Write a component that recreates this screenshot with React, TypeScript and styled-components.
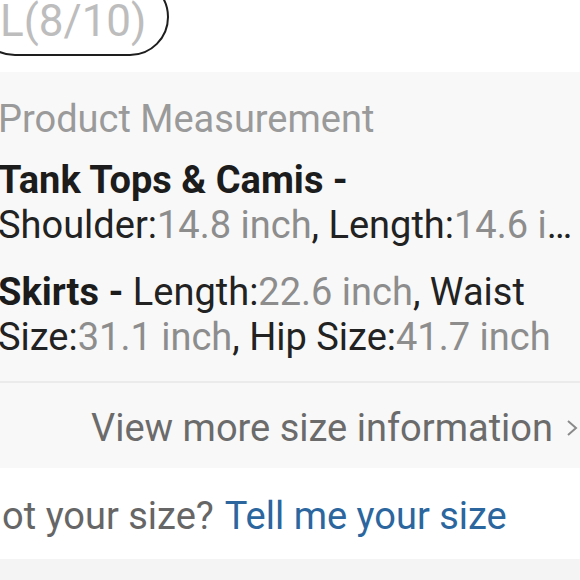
import React from "react";
import styled, { createGlobalStyle } from "styled-components";

const Global = createGlobalStyle`
  html, body { margin: 0; padding: 0; background: #fff; overflow: hidden; }
  body { font-family: Roboto, "Noto Sans", "Liberation Sans", sans-serif; }
`;

const Page = styled.div`
  width: 610px;
  margin-left: -30px;
  display: flex;
  flex-direction: column;
`;

const SizeRow = styled.div`
  height: 72px;
  display: flex;
  align-items: flex-end;
  padding: 0 0 16px 6px;
  box-sizing: border-box;
`;

const Pill = styled.div`
  height: 78px;
  box-sizing: border-box;
  display: inline-flex;
  align-items: center;
  padding: 8px 21px 0 22px;
  border: 2px solid #1e1e1e;
  border-radius: 40px;
  font-size: 44px;
  color: #bdbdbd;
  margin-top: -23px;
`;

const Panel = styled.div`
  background: #f8f8f8;
  display: flex;
  flex-direction: column;
`;

const Measure = styled.div`
  padding: 24px 2px 21px 28px;
  display: flex;
  flex-direction: column;
  gap: 22px;
  border-bottom: 2px solid #ebebeb;
`;

const Title = styled.div`
  font-size: 38px;
  line-height: 46px;
  color: #9a9a9a;
  margin-bottom: -6px;
`;

const Item = styled.div`
  font-size: 38px;
  line-height: 45px;
  color: #222;
  display: -webkit-box;
  -webkit-line-clamp: 2;
  -webkit-box-orient: vertical;
  overflow: hidden;
`;

const Cat = styled.span`
  font-weight: 700;
  color: #1c1c1c;
`;

const Details = styled.span<{ $oneLine?: boolean }>`
  ${(p) =>
    p.$oneLine
      ? `display: inline-block;
         max-width: 100%;
         white-space: nowrap;
         overflow: hidden;
         text-overflow: ellipsis;
         vertical-align: top;`
      : ""}
`;

const Val = styled.span`
  color: #8d8d8d;
`;

const ViewMore = styled.div`
  display: flex;
  justify-content: flex-end;
  align-items: center;
  gap: 13px;
  padding: 4px 2px 0 0;
  height: 85px;
  box-sizing: border-box;
  font-size: 38px;
  color: #6b6b6b;
`;

const Note = styled.div`
  height: 91px;
  display: flex;
  align-items: center;
  padding: 4px 0 0 5px;
  box-sizing: border-box;
  font-size: 38px;
  color: #666;
  gap: 11px;
`;

const Link = styled.span`
  color: #2c669e;
`;

const Band = styled.div`
  height: 30px;
  background: #f4f4f4;
`;

const items: { cat: string; oneLine?: boolean; parts: [string, string][] }[] = [
  {
    cat: "Tank Tops & Camis",
    oneLine: true,
    parts: [
      ["Shoulder:", "14.8 inch"],
      ["Length:", "14.6 inch"],
      ["Bust:", "27.6 inch"],
    ],
  },
  {
    cat: "Skirts",
    parts: [
      ["Length:", "22.6 inch"],
      ["Waist Size:", "31.1 inch"],
      ["Hip Size:", "41.7 inch"],
    ],
  },
];

export default function App() {
  return (
    <>
      <Global />
      <Page>
        <SizeRow>
          <Pill>L(8/10)</Pill>
        </SizeRow>
        <Panel>
          <Measure>
            <Title>Product Measurement</Title>
            {items.map((it) => (
              <Item key={it.cat}>
                <Cat>{it.cat} -</Cat>{" "}
                <Details $oneLine={it.oneLine}>
                  {it.parts.map(([k, v], i) => (
                    <React.Fragment key={k}>
                      {k}
                      <Val>{v}</Val>
                      {i < it.parts.length - 1 ? ", " : ""}
                    </React.Fragment>
                  ))}
                </Details>
              </Item>
            ))}
          </Measure>
          <ViewMore>
            <span>View more size information</span>
            <svg width="12" height="20" viewBox="0 0 12 20">
              <polyline points="2,3 10,10 2,17" fill="none" stroke="#8a8a8a" strokeWidth="2" />
            </svg>
          </ViewMore>
        </Panel>
        <Note>
          <span>Not your size?</span>
          <Link>Tell me your size</Link>
        </Note>
        <Band />
      </Page>
    </>
  );
}
